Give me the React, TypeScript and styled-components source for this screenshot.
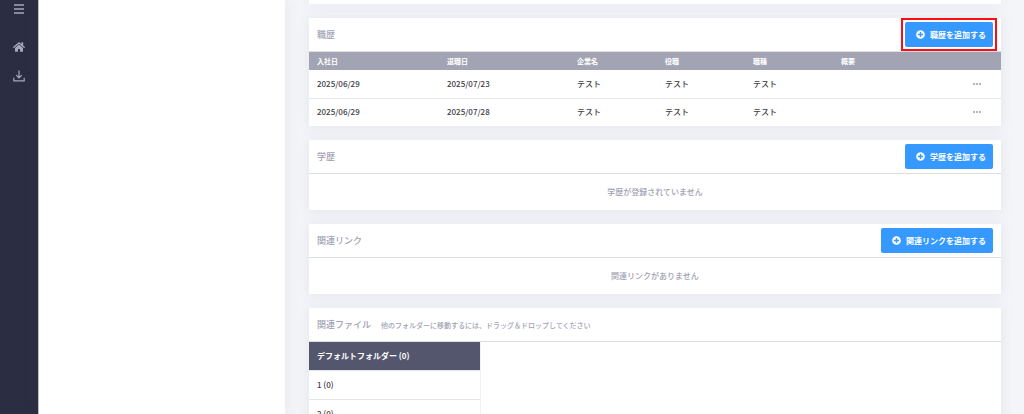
import React from "react";
import styled, { createGlobalStyle, css } from "styled-components";
import { FaHome, FaPlusCircle } from "react-icons/fa";

const GlobalStyle = createGlobalStyle`
  *, *::before, *::after { box-sizing: border-box; }
  body {
    margin: 0;
    background: #f4f5f9;
    color: #3f4047;
    font-family: "Noto Sans CJK JP", "Noto Sans", sans-serif;
    font-size: 8px;
    line-height: 12px;
    font-weight: 500;
  }
  button { font: inherit; cursor: pointer; }
`;

const Shell = styled.div`
  display: flex;
  height: 100vh;
  overflow: hidden;
`;

const Sidebar = styled.div`
  flex: none;
  display: flex;
  flex-direction: column;
  align-items: center;
  gap: 24px;
  width: 38px;
  padding-top: 2px;
  background: #2b2e42;
  color: #a5a8b9;
`;

const navItem = css`
  display: flex;
  align-items: center;
  justify-content: center;
  width: 26px;
  height: 14px;
  padding: 0;
  border: 0;
  background: none;
  color: inherit;
`;

const MenuButton = styled.button`
  ${navItem}
`;

const Nav = styled.nav`
  display: flex;
  flex-direction: column;
  gap: 15px;
`;

const NavLink = styled.a`
  ${navItem}
`;

const Profile = styled.aside`
  flex: none;
  width: 247px;
  border-left: 1px solid #b9bbc4;
  background: #fff;
  box-shadow: 0 1px 15px 1px rgba(69, 65, 78, 0.08);
`;

const Main = styled.main`
  flex: 1;
  min-width: 0;
  display: flex;
  flex-direction: column;
  gap: 14px;
  padding: 0 23px 0 24px;
`;

const Card = styled.section`
  flex: none;
  min-height: 4px;
  background: #fff;
  box-shadow: 0 1px 12px 1px rgba(69, 65, 78, 0.08);
`;

const CardHeader = styled.header`
  display: flex;
  align-items: center;
  gap: 10px;
  min-height: 34px;
  padding: 4px 8px;
  border-bottom: 1px solid #dcdde0;
`;

const CardTitle = styled.h2`
  margin: 0;
  color: #a1a2b4;
  font-size: 9px;
  font-weight: 500;
`;

const Hint = styled.span`
  color: #a1a2b4;
  font-size: 7px;
`;

const AddButton = styled.button<{ $highlighted?: boolean }>`
  position: relative;
  display: flex;
  align-items: center;
  gap: 5px;
  height: 25px;
  margin-left: auto;
  padding: 0 7px 0 11px;
  border: 0;
  border-radius: 2px;
  background: #3699ff;
  color: #fff;
  font-weight: 700;
  ${(p) =>
    p.$highlighted &&
    css`
      &::after {
        content: "";
        position: absolute;
        inset: -4px;
        border: 2px solid #fb0d14;
      }
    `}
`;

const Table = styled.table`
  width: 100%;
  table-layout: fixed;
  border-collapse: collapse;
  text-align: left;
`;

const HeadCell = styled.th<{ $width?: number }>`
  width: ${(p) => (p.$width ? `${p.$width}px` : "auto")};
  height: 18px;
  padding: 0 8px;
  background: #a3a4b3;
  color: #fff;
  font-size: 7px;
  font-weight: 700;
`;

const Row = styled.tr`
  & + & td {
    border-top: 1px solid #e6e7ea;
  }
`;

const Cell = styled.td`
  height: 28px;
  padding: 0 8px;
`;

const MoreButton = styled.button`
  display: flex;
  align-items: center;
  justify-content: center;
  width: 100%;
  height: 12px;
  padding: 0;
  border: 0;
  background: none;
  color: #9b9cab;
`;

const Empty = styled.p`
  margin: 0;
  padding: 12px;
  color: #a1a2b4;
  text-align: center;
`;

const FolderList = styled.ul`
  width: 172px;
  margin: 0;
  padding: 0;
  border-right: 1px solid #f0f1f6;
  list-style: none;
`;

const Folder = styled.li`
  & + & {
    border-top: 1px solid #e4e5ea;
  }
`;

const FolderButton = styled.button<{ $active?: boolean }>`
  display: block;
  width: 100%;
  height: 28px;
  padding: 0 8px;
  border: 0;
  background: ${(p) => (p.$active ? "#53566c" : "#fff")};
  color: ${(p) => (p.$active ? "#fff" : "#3f4047")};
  font-weight: ${(p) => (p.$active ? 700 : 500)};
  text-align: left;
`;

const MenuIcon = () => (
  <svg width="10" height="10" viewBox="0 0 10 10" stroke="currentColor" strokeWidth="1.4" aria-hidden="true">
    <path d="M0 1h10M0 5h10M0 9h10" />
  </svg>
);

const DownloadIcon = () => (
  <svg width="12" height="12" viewBox="0 0 12 12" fill="none" stroke="currentColor" strokeWidth="1.2" aria-hidden="true">
    <path d="M6 .5v7.2M3.2 5.2 6 8l2.8-2.8M.8 7.8v3.1h10.4V7.8" />
  </svg>
);

const MoreIcon = () => (
  <svg width="8" height="2" viewBox="0 0 8 2" fill="currentColor" aria-hidden="true">
    <circle cx="1" cy="1" r="1" />
    <circle cx="4" cy="1" r="1" />
    <circle cx="7" cy="1" r="1" />
  </svg>
);

const columns = [
  { label: "入社日", width: 130 },
  { label: "退職日", width: 130 },
  { label: "企業名", width: 88 },
  { label: "役職", width: 88 },
  { label: "職種", width: 88 },
  { label: "概要" },
];

const jobs = [
  ["2025/06/29", "2025/07/23", "テスト", "テスト", "テスト", ""],
  ["2025/06/29", "2025/07/28", "テスト", "テスト", "テスト", ""],
];

const folders = ["デフォルトフォルダー (0)", "1 (0)", "2 (0)"];

function Add({ label, highlighted }: { label: string; highlighted?: boolean }) {
  return (
    <AddButton type="button" $highlighted={highlighted}>
      <FaPlusCircle size={9} aria-hidden="true" />
      {label}
    </AddButton>
  );
}

export default function App() {
  return (
    <>
      <GlobalStyle />
      <Shell>
        <Sidebar>
          <MenuButton type="button" aria-label="メニューを開く">
            <MenuIcon />
          </MenuButton>
          <Nav aria-label="メニュー">
            <NavLink href="#home" aria-label="ホーム">
              <FaHome size={12} />
            </NavLink>
            <NavLink href="#download" aria-label="ダウンロード">
              <DownloadIcon />
            </NavLink>
          </Nav>
        </Sidebar>
        <Profile />
        <Main>
          <Card />
          <Card>
            <CardHeader>
              <CardTitle>職歴</CardTitle>
              <Add label="職歴を追加する" highlighted />
            </CardHeader>
            <Table>
              <thead>
                <tr>
                  {columns.map((c) => (
                    <HeadCell key={c.label} scope="col" $width={c.width}>
                      {c.label}
                    </HeadCell>
                  ))}
                  <HeadCell as="td" $width={48} />
                </tr>
              </thead>
              <tbody>
                {jobs.map((job, i) => (
                  <Row key={i}>
                    {job.map((value, j) => (
                      <Cell key={j}>{value}</Cell>
                    ))}
                    <Cell>
                      <MoreButton type="button" aria-label="操作">
                        <MoreIcon />
                      </MoreButton>
                    </Cell>
                  </Row>
                ))}
              </tbody>
            </Table>
          </Card>
          <Card>
            <CardHeader>
              <CardTitle>学歴</CardTitle>
              <Add label="学歴を追加する" />
            </CardHeader>
            <Empty>学歴が登録されていません</Empty>
          </Card>
          <Card>
            <CardHeader>
              <CardTitle>関連リンク</CardTitle>
              <Add label="関連リンクを追加する" />
            </CardHeader>
            <Empty>関連リンクがありません</Empty>
          </Card>
          <Card>
            <CardHeader>
              <CardTitle>関連ファイル</CardTitle>
              <Hint>他のフォルダーに移動するには、ドラッグ＆ドロップしてください</Hint>
            </CardHeader>
            <FolderList>
              {folders.map((name, i) => (
                <Folder key={name}>
                  <FolderButton type="button" $active={i === 0}>
                    {name}
                  </FolderButton>
                </Folder>
              ))}
            </FolderList>
          </Card>
        </Main>
      </Shell>
    </>
  );
}
